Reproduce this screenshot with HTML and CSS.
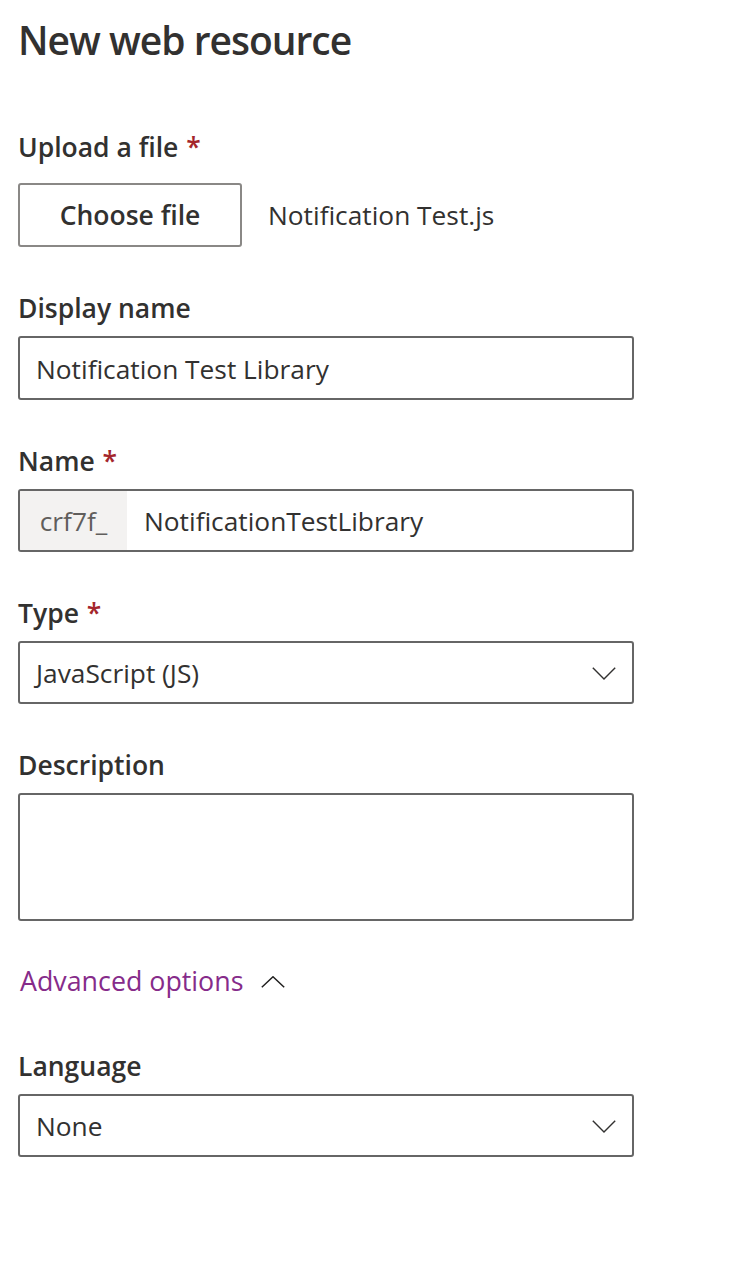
FILE: index.html
```html
<!DOCTYPE html>
<html lang="en">
<head>
<meta charset="utf-8">
<title>New web resource</title>
<link rel="stylesheet" href="styles.css">
</head>
<body>
<main class="panel">
  <h1 class="title">New web resource</h1>

  <div class="field field-first">
    <div class="label label-upload">Upload a file <span class="req">*</span></div>
    <div class="upload-row">
      <button class="btn" type="button">Choose file</button>
      <span class="filename">Notification Test.js</span>
    </div>
  </div>

  <div class="field">
    <div class="label">Display name</div>
    <div class="box"><span class="value">Notification Test Library</span></div>
  </div>

  <div class="field">
    <div class="label">Name <span class="req">*</span></div>
    <div class="box box-prefixed">
      <span class="prefix">crf7f_</span>
      <span class="value">NotificationTestLibrary</span>
    </div>
  </div>

  <div class="field">
    <div class="label">Type <span class="req">*</span></div>
    <div class="box box-select">
      <span class="value">JavaScript (JS)</span>
      <svg class="chev" width="24" height="13" viewBox="0 0 24 13"><polyline points="0.8,0.8 12,12 23.2,0.8" fill="none" stroke="#323130" stroke-width="1.4"/></svg>
    </div>
  </div>

  <div class="field">
    <div class="label">Description</div>
    <div class="box box-area"></div>
  </div>

  <div class="advanced">
    <span class="adv-text">Advanced options</span>
    <svg class="chev-up" width="24" height="12" viewBox="0 0 24 12"><polyline points="0.8,11.2 12,0.8 23.2,11.2" fill="none" stroke="#201f1e" stroke-width="1.5"/></svg>
  </div>

  <div class="field field-lang">
    <div class="label">Language</div>
    <div class="box box-select">
      <span class="value">None</span>
      <svg class="chev" width="24" height="13" viewBox="0 0 24 13"><polyline points="0.8,0.8 12,12 23.2,0.8" fill="none" stroke="#323130" stroke-width="1.4"/></svg>
    </div>
  </div>
</main>
</body>
</html>
```

FILE: styles.css
```css
* { box-sizing: border-box; }

html, body {
  margin: 0;
  padding: 0;
  background: #ffffff;
}

body {
  font-family: "Open Sans", "Noto Sans", "Liberation Sans", sans-serif;
  color: #323130;
}

.panel {
  width: 754px;
  padding: 16px 0 0 18px;
  display: flex;
  flex-direction: column;
}

.title {
  margin: 0;
  font-size: 39px;
  line-height: 48px;
  font-weight: 600;
  letter-spacing: -1px;
  color: #323130;
}

.field {
  display: flex;
  flex-direction: column;
  margin-top: 45px;
}

.field-first {
  margin-top: 67px;
}

.label {
  font-size: 26.5px;
  line-height: 32px;
  font-weight: 600;
  letter-spacing: 0;
  margin: 0 0 12px 0;
  color: #323130;
}

.label-upload {
  margin-bottom: 20px;
}

.req {
  color: #a4262c;
  margin-left: 1px;
}

.upload-row {
  display: flex;
  align-items: center;
  gap: 26px;
  height: 64px;
}

.btn {
  width: 224px;
  height: 64px;
  border: 2px solid #8a8886;
  border-radius: 3px;
  background: #ffffff;
  font-family: inherit;
  font-size: 26.5px;
  font-weight: 600;
  color: #323130;
  padding: 0;
}

.filename {
  font-size: 26.3px;
  color: #323130;
}

.box {
  width: 616px;
  height: 64px;
  border: 2px solid #666666;
  border-radius: 3px;
  display: flex;
  align-items: center;
  padding: 1px 16px 0 16px;
  overflow: hidden;
}

.value {
  font-size: 26.3px;
  color: #323130;
  white-space: nowrap;
}

.box-prefixed {
  padding: 0;
  height: 63px;
}

.prefix {
  align-self: stretch;
  width: 107px;
  background: #f3f2f1;
  display: flex;
  align-items: center;
  justify-content: center;
  font-size: 26.3px;
  color: #605e5c;
  margin-right: 17px;
}

.box-select {
  justify-content: space-between;
  height: 63px;
}

.chev {
  display: block;
}

.box-area {
  height: 128px;
}

.advanced {
  display: flex;
  align-items: center;
  gap: 18px;
  margin-top: 44px;
  height: 32px;
  padding-left: 2px;
}

.adv-text {
  font-size: 26.8px;
  line-height: 32px;
  color: #862b8a;
}

.chev-up {
  display: block;
  margin-top: 1px;
}

.field-lang {
  margin-top: 53px;
}
```
